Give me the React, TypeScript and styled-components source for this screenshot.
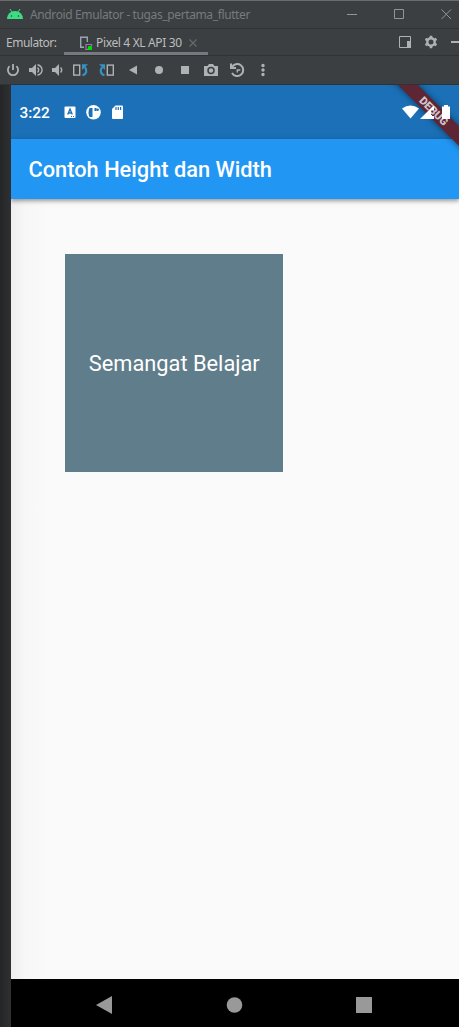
import React from "react";
import styled, { createGlobalStyle } from "styled-components";

const Global = createGlobalStyle`
  * { box-sizing: border-box; }
  body { margin: 0; background: #2b2d2e; overflow: hidden; }
  svg { display: block; flex: none; }
`;

const Window = styled.div`
  width: 459px;
  height: 1027px;
  display: flex;
  flex-direction: column;
  overflow: hidden;
  background: #3c3f41;
  font-family: "Noto Sans", "Open Sans", sans-serif;
  font-size: 12px;
`;

const TitleBar = styled.header`
  height: 29px;
  flex: none;
  display: flex;
  align-items: center;
  padding: 0 7px 2px;
  border-top: 1px solid #6a6b6b;
  border-bottom: 1px solid #323232;
`;

const WindowTitle = styled.span`
  margin-left: 7px;
  padding-top: 2px;
  width: 222px;
  color: #777a7c;
  font-size: 12px;
  letter-spacing: -0.38px;
  white-space: nowrap;
`;

const WindowButtons = styled.div`
  margin-left: auto;
  padding-top: 2px;
  display: flex;
  gap: 36px;
`;

const TabBar = styled.div`
  height: 27px;
  flex: none;
  display: flex;
  align-items: stretch;
  padding-left: 6px;
  border-bottom: 1px solid #323232;
  color: #bbbdbf;
`;

const TabLabel = styled.span`
  width: 58px;
  line-height: 28px;
  letter-spacing: -0.48px;
  white-space: nowrap;
`;

const Tab = styled.div`
  width: 144px;
  display: flex;
  align-items: center;
  padding-left: 15px;
  border-bottom: 3px solid #747a80;
  padding-top: 4px;
`;

const TabName = styled.span`
  width: 93px;
  margin-left: 3px;
  line-height: 20px;
  letter-spacing: -0.35px;
  white-space: nowrap;
`;

const TabActions = styled.div`
  margin-left: auto;
  display: flex;
  align-items: center;
  gap: 13px;
`;

const Toolbar = styled.div`
  height: 29px;
  flex: none;
  display: flex;
  align-items: center;
  padding-left: 4px;
  border-bottom: 1px solid #303234;
`;

const Tool = styled.span<{ $gap?: number }>`
  margin-right: ${(p) => p.$gap ?? 8}px;
  color: #afb1b3;
`;

const Device = styled.div`
  flex: 1;
  display: flex;
  padding-left: 11px;
  background: linear-gradient(90deg, #232526, #2e3031 11px);
`;

const Screen = styled.main`
  position: relative;
  flex: 1;
  display: flex;
  flex-direction: column;
  overflow: hidden;
  background: #fafafa;
  color: #fff;
  font-family: Roboto, sans-serif;
`;

const StatusBar = styled.div`
  height: 54px;
  flex: none;
  display: flex;
  align-items: center;
  padding: 1px 9px 0 8.5px;
  background: #1b70b7;
`;

const Clock = styled.span`
  width: 44.5px;
  font-size: 15.4px;
  font-weight: 500;
  line-height: 18px;
`;

const StatusGroup = styled.div<{ $end?: boolean }>`
  position: relative;
  z-index: 2;
  display: flex;
  align-items: center;
  margin-left: ${(p) => (p.$end ? "auto" : 0)};
`;

const AppBar = styled.div`
  position: relative;
  height: 60px;
  flex: none;
  display: flex;
  align-items: center;
  padding-left: 17.5px;
  background: #2196f3;
  box-shadow: 0 2px 4px rgba(0, 0, 0, 0.32), 0 1px 7px rgba(0, 0, 0, 0.12);
`;

const AppTitle = styled.h1`
  margin: 1px 0 0;
  font-size: 21.8px;
  font-weight: 500;
  line-height: 28px;
  white-space: nowrap;
`;

const Body = styled.section`
  flex: 1;
  padding: 55px 0 0 54px;
  background: linear-gradient(90deg, #ededed, #f7f7f7 14px, #fafafa 38px);
`;

const Box = styled.div`
  width: 218px;
  height: 218px;
  display: flex;
  align-items: center;
  justify-content: center;
  padding-left: 0.5px;
  background: #607d8b;
  font-size: 21.8px;
  white-space: nowrap;
`;

const NavBar = styled.nav`
  height: 48px;
  flex: none;
  display: flex;
  align-items: center;
  justify-content: space-between;
  padding: 3px 87px 0 85px;
  background: #000;
`;

const Ribbon = styled.div`
  position: absolute;
  top: 18.7px;
  right: -30px;
  width: 110px;
  height: 13.5px;
  transform: rotate(45deg);
  background: #5e2535;
  box-shadow: 0 0 6px rgba(0, 0, 0, 0.5);
  color: #d2c3c8;
  font-size: 11.1px;
  font-weight: 900;
  line-height: 15px;
  text-align: center;
`;

const G = "#afb1b3";
const B = "#3592c4";

const AndroidHead = () => (
  <svg width="16" height="12" viewBox="0 0 16 12">
    <path d="M3 1l2 3M13 1l-2 3" stroke="#3ddc84" strokeWidth="1" />
    <path d="M0 11a8 8 0 0 1 16 0z" fill="#3ddc84" />
    <circle cx="4.5" cy="8" r=".8" fill="#3c3f41" />
    <circle cx="11.5" cy="8" r=".8" fill="#3c3f41" />
  </svg>
);

const PhoneTab = () => (
  <svg width="14" height="14" viewBox="0 0 14 14" fill="none">
    <path d="M5 11.3H1.700V1.200h6.600V6" stroke="#9aa7b0" strokeWidth="1.4" />
    <path d="M7 12V8.500h5.500V10" stroke="#9876aa" strokeWidth="1.2" />
    <path d="M6 13.2h4" stroke="#9aa7b0" />
    <rect x="9" y="10" width="4" height="4" rx="1" fill="#00e000" />
  </svg>
);

const Rotate = ({ flip = false }: { flip?: boolean }) => (
  <svg width="18" height="18" viewBox="0 0 18 18" fill="none">
    <g transform={flip ? "translate(17 0) scale(-1 1)" : undefined}>
      <rect x="1.700" y="4.1" width="6" height="10" stroke={G} strokeWidth="1.4" />
      <path d="M10.500 14.200c4.300-1.200 4.800-5.400 2.300-8" stroke={B} strokeWidth="2.200" />
      <path d="M10 3.300h6L10 9z" fill={B} />
    </g>
  </svg>
);

const Speaker = ({ loud = false }: { loud?: boolean }) => (
  <svg width="18" height="18" viewBox="0 0 18 18" fill="none">
    <path
      d={loud ? "M2 7h3l4-4v12l-4-4H2z" : "M4 7h3l4-4v12l-4-4H4z"}
      fill={G}
    />
    <path
      d={loud ? "M10.5 6.5q2.4 2.5 0 5M10.5 3.8c6 1.6 6 8.8 0 10.4" : "M12.5 6.5q2.4 2.5 0 5"}
      stroke={G}
      strokeWidth="1.4"
    />
  </svg>
);

export default function App() {
  return (
    <>
      <Global />
      <Window>
        <TitleBar>
          <AndroidHead />
          <WindowTitle>Android Emulator - tugas_pertama_flutter</WindowTitle>
          <WindowButtons>
            <svg width="11" height="11" stroke="#929496"><path d="M0 5.5h10" /></svg>
            <svg width="11" height="11" stroke="#929496" fill="none"><path d="M.5.5h9v9H.5z" /></svg>
            <svg width="11" height="11" stroke="#929496"><path d="M.5.5l9.500 9.500M10 .5L.5 10" /></svg>
          </WindowButtons>
        </TitleBar>

        <TabBar>
          <TabLabel>Emulator:</TabLabel>
          <Tab>
            <PhoneTab />
            <TabName>Pixel 4 XL API 30</TabName>
            <svg width="8" height="8" stroke="#696c6e" strokeWidth="1.1"><path d="M.5.5l7 7M7.500.5l-7 7" /></svg>
          </Tab>
          <TabActions>
            <svg width="12" height="12" fill="none">
              <path d="M.5.5h11v11H.5z" stroke={G} />
              <path d="M8 5h4v7H8z" fill={G} />
            </svg>
            <svg width="14" height="14" viewBox="0 0 14 14" fill="none" stroke={G}>
              <circle cx="7" cy="7" r="3.7" strokeWidth="2.4" />
              <path d="M7 .7v2.500M7 10.800v2.500M1.500 3.900l2.200 1.200M10.300 8.900l2.200 1.200M1.500 10.100l2.200-1.200M10.300 5.100l2.200-1.200" strokeWidth="2.600" />
            </svg>
            <svg width="8" height="12"><path d="M0 6h8" stroke={G} strokeWidth="2" /></svg>
          </TabActions>
        </TabBar>

        <Toolbar>
          <Tool $gap={5}>
            <svg width="18" height="18" fill="none" stroke={G} strokeWidth="1.8">
              <path d="M9 3v6M5.600 5.200a5.100 5.100 0 1 0 6.800 0" />
            </svg>
          </Tool>
          <Tool $gap={3}><Speaker loud /></Tool>
          <Tool $gap={6}><Speaker /></Tool>
          <Tool><Rotate /></Tool>
          <Tool><Rotate flip /></Tool>
          <Tool><svg width="18" height="18"><path d="M13 4.500v9L5 9z" fill={G} /></svg></Tool>
          <Tool><svg width="18" height="18"><circle cx="9" cy="9" r="4" fill={G} /></svg></Tool>
          <Tool><svg width="18" height="18"><path d="M5 5h8v8H5z" fill={G} /></svg></Tool>
          <Tool>
            <svg width="18" height="18">
              <path d="M2 5h3.500l1.500-2h4l1.500 2H16v10H2z" fill={G} />
              <circle cx="9" cy="9.500" r="3" fill="none" stroke="#3c3f41" strokeWidth="1.500" />
            </svg>
          </Tool>
          <Tool>
            <svg width="18" height="18" fill="none" stroke={G} strokeWidth="2">
              <path d="M3.800 6.500A6 6 0 1 1 4 12M3 2.500v4.500h5" />
              <path d="M9.300 11.500V9h3" strokeWidth="1.400" />
            </svg>
          </Tool>
          <Tool>
            <svg width="18" height="18" fill={G}>
              <circle cx="9" cy="4.500" r="1.700" /><circle cx="9" cy="9" r="1.700" /><circle cx="9" cy="13.500" r="1.700" />
            </svg>
          </Tool>
        </Toolbar>

        <Device>
          <Screen>
            <StatusBar>
              <Clock>3:22</Clock>
              <StatusGroup>
                <svg width="38" height="16" viewBox="0 0 38 16">
                  <rect x="0.500" y="1.500" width="11" height="11.500" rx="1" fill="#fff" />
                  <path d="M3.700 9.500L6 4l2.300 5.500M4.500 8h3" fill="none" stroke="#1b70b7" strokeWidth="1.300" />
                  <path d="M7 11.500h3" stroke="#1b70b7" strokeDasharray="1" />
                  <circle cx="29.500" cy="7.300" r="7.300" fill="#fff" />
                  <path d="M25.500 3h3v9h-3q-2-4.500 0-9z" fill="#1b70b7" />
                  <path d="M30.500 3h2v3h-2z" fill="#1b70b7" />
                  <circle cx="33.600" cy="4.800" r="1.300" fill="#1b70b7" />
                </svg>
                <svg width="22" height="16" viewBox="0 0 22 16">
                  <path d="M13.500 .5H20q1 0 1 1V13q0 1-1 1h-9q-1 0-1-1V4z" fill="#fff" />
                  <path d="M14 2v3M16.300 2v3M18.600 2v3" stroke="#1b70b7" strokeWidth="1.200" />
                </svg>
              </StatusGroup>
              <StatusGroup $end>
                <svg width="48" height="16" viewBox="0 0 48 16" fill="#fff">
                  <path d="M0 3.500q8.500-6 17 0L8.500 13.500z" />
                  <path d="M18 14L32 0v5h-3v5h1v4z" />
                  <path d="M30 11h2v3h-2z" />
                  <path d="M42 0h4v1.500h2V14h-8V1.500h2z" />
                </svg>
              </StatusGroup>
            </StatusBar>
            <AppBar><AppTitle>Contoh Height dan Width</AppTitle></AppBar>
            <Body><Box>Semangat Belajar</Box></Body>
            <NavBar>
              <svg width="16" height="18"><path d="M16 0v18L0 9z" fill="#999" /></svg>
              <svg width="18" height="16"><circle cx="9.500" cy="8" r="7.800" fill="#999" /></svg>
              <svg width="16" height="16"><path d="M0 0h16v16H0z" fill="#999" /></svg>
            </NavBar>
            <Ribbon>DEBUG</Ribbon>
          </Screen>
        </Device>
      </Window>
    </>
  );
}
